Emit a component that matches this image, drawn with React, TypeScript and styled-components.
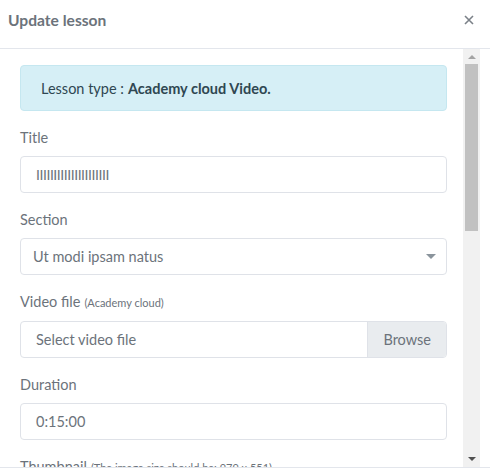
import styled, { createGlobalStyle } from 'styled-components'

const GlobalStyle = createGlobalStyle`
  html, body {
    margin: 0;
    padding: 0;
    background: #ffffff;
  }

  body {
    font-family: Lato, "Noto Sans", "Liberation Sans", sans-serif;
    color: #6c757d;
  }
`

const Modal = styled.div`
  display: flex;
  flex-direction: column;
  width: 490px;
  height: 476px;
  overflow: hidden;
  background: #ffffff;
`

const Header = styled.div`
  display: flex;
  align-items: center;
  justify-content: space-between;
  height: 49px;
  padding: 0 12px 0 8px;
  border-bottom: 1px solid #e3e6ec;
  box-sizing: border-box;
  flex: none;
`

const HeaderTitle = styled.h5`
  margin: 0 0 8px;
  font-size: 15.6px;
  font-weight: 700;
  color: #6c737b;
`

const CloseButton = styled.button`
  border: none;
  background: none;
  padding: 0;
  margin-bottom: 8px;
  width: 18px;
  height: 18px;
  display: flex;
  align-items: center;
  justify-content: center;
  cursor: pointer;
`

const BodyRow = styled.div`
  display: flex;
  height: 418px;
  flex: none;
  border-bottom: 1px solid #e3e6ec;
`

const BodyContent = styled.div`
  flex: 1;
  overflow: hidden;
  padding: 16px 16px 0 20px;
`

const ScrollTrack = styled.div`
  width: 17px;
  margin-right: 10px;
  background: #f1f1f1;
  display: flex;
  flex-direction: column;
  align-items: center;
`

const ScrollArrow = styled.div<{ $up: boolean }>`
  width: 0;
  height: 0;
  margin: ${({ $up }) => ($up ? '6px 0 5px' : 'auto 0 6px')};
  border-left: 4px solid transparent;
  border-right: 4px solid transparent;
  ${({ $up }) =>
    $up ? 'border-bottom: 4px solid #a3a3a3;' : 'border-top: 4px solid #505050;'}
`

const ScrollThumb = styled.div`
  width: 13px;
  height: 167px;
  background: #c1c1c1;
`

const Alert = styled.div`
  padding: 0 20px;
  height: 46px;
  display: flex;
  align-items: center;
  box-sizing: border-box;
  background: #d6eff6;
  border: 1px solid #c5e7f0;
  border-radius: 4px;
  font-size: 14.5px;
  color: #2f4752;
  margin-bottom: 16px;
`

const AlertStrong = styled.strong`
  font-weight: 700;
  margin-left: 4px;
`

const FormGroup = styled.div`
  margin-bottom: 16px;
`

const Label = styled.label`
  display: block;
  font-size: 14.5px;
  line-height: 21px;
  margin-bottom: 8px;
  color: #6c737b;
`

const LabelNote = styled.small`
  font-size: 11px;
  margin-left: 4px;
`

const Field = styled.div`
  display: flex;
  align-items: center;
  justify-content: space-between;
  height: 37px;
  box-sizing: border-box;
  border: 1px solid #dfe2e8;
  border-radius: 4px;
  background: #ffffff;
  overflow: hidden;
`

const FieldText = styled.span<{ $indent: number; $tight?: boolean }>`
  padding-left: ${({ $indent }) => $indent}px;
  font-size: 14.5px;
  color: #6c737b;
  white-space: nowrap;
  ${({ $tight }) => ($tight ? 'letter-spacing: -0.45px; font-size: 14px;' : '')}
`

const SelectCaret = styled.div`
  width: 0;
  height: 0;
  margin-right: 10px;
  border-left: 5px solid transparent;
  border-right: 5px solid transparent;
  border-top: 5px solid #8a949c;
`

const BrowseButton = styled.div`
  align-self: stretch;
  display: flex;
  align-items: center;
  padding: 0 15px;
  background: #e9ecef;
  border-left: 1px solid #dfe2e8;
  font-size: 14.5px;
  color: #6c737b;
`

const App = () => {
  return (
    <Modal>
      <GlobalStyle />
      <Header>
        <HeaderTitle>Update lesson</HeaderTitle>
        <CloseButton aria-label="Close">
          <svg width="10" height="10" viewBox="0 0 10 10">
            <path d="M1 1 L9 9 M9 1 L1 9" stroke="#7b8188" strokeWidth="1.6" />
          </svg>
        </CloseButton>
      </Header>

      <BodyRow>
        <BodyContent>
          <Alert>
            Lesson type :<AlertStrong>Academy cloud Video.</AlertStrong>
          </Alert>

          <FormGroup>
            <Label>Title</Label>
            <Field>
              <FieldText $indent={15} $tight>
                {'I'.repeat(21)}
              </FieldText>
            </Field>
          </FormGroup>

          <FormGroup>
            <Label>Section</Label>
            <Field>
              <FieldText $indent={12}>Ut modi ipsam natus</FieldText>
              <SelectCaret />
            </Field>
          </FormGroup>

          <FormGroup>
            <Label>
              Video file<LabelNote>(Academy cloud)</LabelNote>
            </Label>
            <Field>
              <FieldText $indent={15}>Select video file</FieldText>
              <BrowseButton>Browse</BrowseButton>
            </Field>
          </FormGroup>

          <FormGroup>
            <Label>Duration</Label>
            <Field>
              <FieldText $indent={15}>0:15:00</FieldText>
            </Field>
          </FormGroup>

          <FormGroup>
            <Label>
              Thumbnail<LabelNote>(The image size should be: 979 x 551)</LabelNote>
            </Label>
          </FormGroup>
        </BodyContent>
        <ScrollTrack>
          <ScrollArrow $up />
          <ScrollThumb />
          <ScrollArrow $up={false} />
        </ScrollTrack>
      </BodyRow>
    </Modal>
  )
}

export default App
